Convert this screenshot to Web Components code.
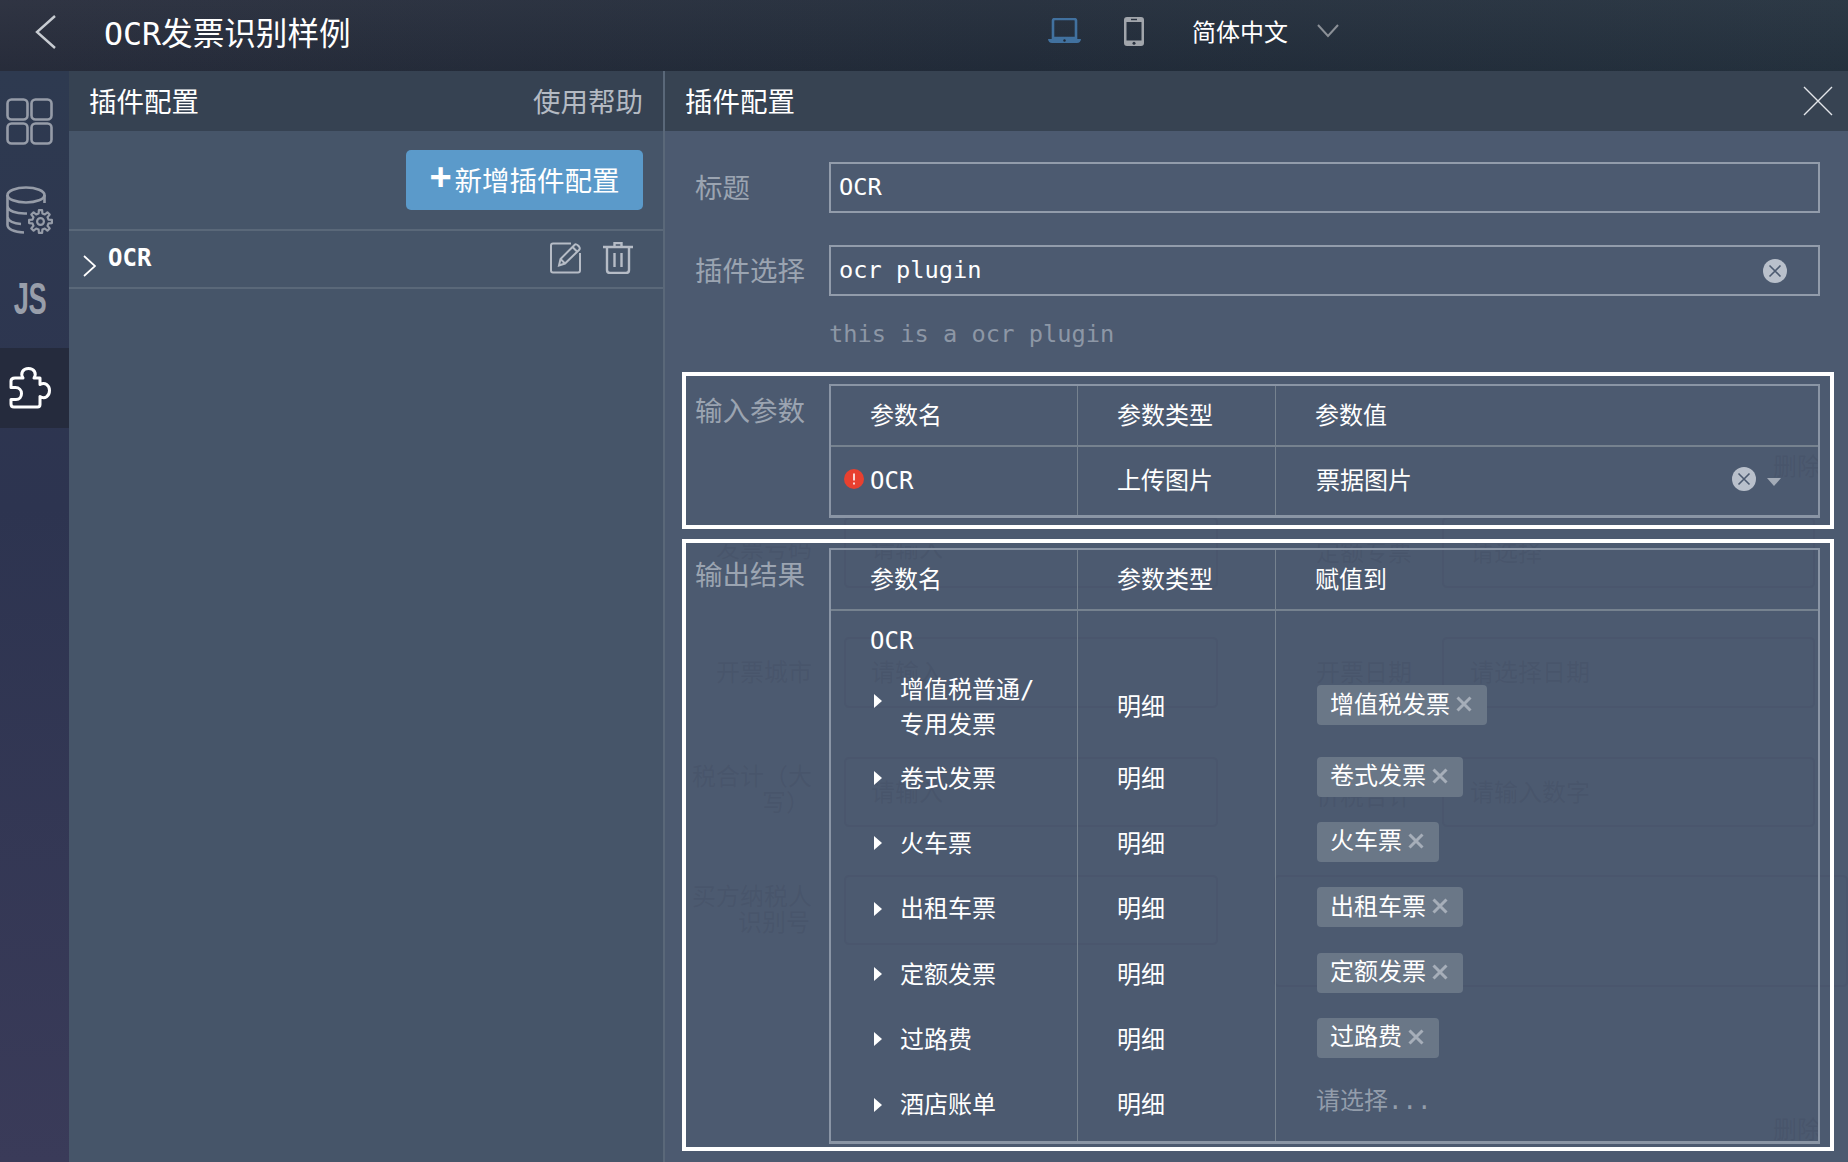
<!DOCTYPE html>
<html lang="zh-CN">
<head>
<meta charset="utf-8">
<title>OCR发票识别样例</title>
<style>
  html, body { margin: 0; height: 100%; background: #465569; overflow: hidden; }
  body { font: 24px "DejaVu Sans Mono", "Noto Sans CJK SC", monospace; color: #fff; }
</style>
</head>
<body>
<app-shell>
  <top-bar slot="top" heading="OCR发票识别样例"></top-bar>
  <side-nav slot="nav"></side-nav>
  <plugin-list slot="list"></plugin-list>
  <config-panel slot="panel">
    <form-row label="标题"><text-field value="OCR"></text-field></form-row>
    <form-row label="插件选择"><text-field value="ocr plugin" clearable></text-field></form-row>
    <plugin-desc>this is a ocr plugin</plugin-desc>

    <param-section label="输入参数" style="margin-top:0">
      <param-table columns="参数名,参数类型,参数值">
        <param-row height="68">
          <span slot="name"><error-dot></error-dot>OCR</span>
          <span slot="type">上传图片</span>
          <select-value slot="value">票据图片</select-value>
        </param-row>
      </param-table>
    </param-section>

    <param-section label="输出结果" style="margin-top:10px">
      <param-table columns="参数名,参数类型,赋值到">
        <param-row height="61.5"><span slot="name">OCR</span></param-row>
        <param-row height="74" pad="4" arrow-up="6" tree>
          <span slot="name">增值税普通/<br>专用发票</span>
          <span slot="type">明细</span>
          <value-tag slot="value">增值税发票</value-tag>
        </param-row>
        <param-row height="65.3" tree><span slot="name">卷式发票</span><span slot="type">明细</span><value-tag slot="value">卷式发票</value-tag></param-row>
        <param-row height="65.3" tree><span slot="name">火车票</span><span slot="type">明细</span><value-tag slot="value">火车票</value-tag></param-row>
        <param-row height="65.3" tree><span slot="name">出租车票</span><span slot="type">明细</span><value-tag slot="value">出租车票</value-tag></param-row>
        <param-row height="65.3" tree><span slot="name">定额发票</span><span slot="type">明细</span><value-tag slot="value">定额发票</value-tag></param-row>
        <param-row height="65.3" tree><span slot="name">过路费</span><span slot="type">明细</span><value-tag slot="value">过路费</value-tag></param-row>
        <param-row height="68" pad="2" tree>
          <span slot="name">酒店账单</span>
          <span slot="type">明细</span>
          <span slot="value" style="color:#939dab;position:relative;top:-4px">请选择...</span>
        </param-row>
      </param-table>
    </param-section>
  </config-panel>
</app-shell>

<script>
const FONT = `"DejaVu Sans Mono", "Noto Sans CJK SC", monospace`;

class AppShell extends HTMLElement {
  constructor() {
    super();
    this.shadowDOM = this.attachShadow({ mode: "open" });
  }

  connectedCallback() {
    this.shadowDOM.innerHTML = `
    <style>
      :host { display: grid; width: 1848px; height: 1162px; grid-template: 71px 1fr / 69px 596px 1fr; overflow: hidden; }
      .top { grid-column: 1 / 4; display: flex; }
      .top ::slotted(*) { flex: 1; }
    </style>
    <div class="top"><slot name="top"></slot></div>
    <slot name="nav"></slot>
    <slot name="list"></slot>
    <slot name="panel"></slot>`;
  }
}

class TopBar extends HTMLElement {
  constructor() {
    super();
    this.shadowDOM = this.attachShadow({ mode: "open" });
  }

  connectedCallback() {
    this.shadowDOM.innerHTML = `
    <style>
      :host { display: flex; align-items: center; height: 71px; color: #fff; font-family: ${FONT};
        background: linear-gradient(180deg, rgba(255,255,255,.035), rgba(0,0,0,.03)), linear-gradient(95deg, #282d3c, #222c3a 55%, #25323f); }
      svg { display: block; flex: none; }
      .back { margin: -8px 0 0 34px; }
      h1 { margin: -10px 0 0 47px; font-size: 31.6px; font-weight: 400; width: 944px; white-space: nowrap; }
      .phone { margin: -9px 0 0 43px; }
      .lang { margin: -11px 0 0 48px; font-size: 24px; width: 125px; white-space: nowrap; }
      .laptop { margin-top: -9px; }
      .down { margin-top: -9px; }
    </style>
    <svg class="back" width="23" height="34" viewBox="0 0 23 34" fill="none" stroke="#c8ccd2" stroke-width="2.4"><path d="M21 1 L3 17 L21 33"/></svg>
    <h1>${this.getAttribute("heading")}</h1>
    <svg class="laptop" width="33" height="26" viewBox="0 0 33 26"><path d="M5 2.5 Q5 1 7 1 H26 Q28 1 28 2.5 V20 H5 Z" fill="none" stroke="#41719f" stroke-width="2.6"/><path d="M0 21 H33 Q32.5 25 29 25 H4 Q.5 25 0 21Z" fill="#41719f"/><circle cx="16.5" cy="22.5" r="1.2" fill="#1f2a38"/></svg>
    <svg class="phone" width="20" height="29" viewBox="0 0 20 29"><path fill="#a1a5ab" fill-rule="evenodd" d="M3 0 H17 Q20 0 20 3 V26 Q20 29 17 29 H3 Q0 29 0 26 V3 Q0 0 3 0Z M2.5 5 V23.5 H17.5 V5Z"/><rect x="7" y="1.8" width="6" height="1.4" fill="#2a3240"/><circle cx="10" cy="26.2" r="1.5" fill="#2a3240"/></svg>
    <span class="lang">简体中文</span>
    <svg class="down" width="22" height="14" viewBox="0 0 22 14" fill="none" stroke="#8b9097" stroke-width="2"><path d="M1 1 L11 12 L21 1"/></svg>`;
  }
}

class SideNav extends HTMLElement {
  constructor() {
    super();
    this.shadowDOM = this.attachShadow({ mode: "open" });
  }

  gearPath(cx, cy) {
    let d = "";
    for (let i = 0; i < 8; i++) {
      const a = (i * Math.PI) / 4;
      [[-0.24, 8.2], [-0.14, 11.5], [0.14, 11.5], [0.24, 8.2]].forEach(([o, r], j) => {
        const x = (cx + r * Math.sin(a + o)).toFixed(1);
        const y = (cy - r * Math.cos(a + o)).toFixed(1);
        d += `${i === 0 && j === 0 ? "M" : "L"}${x} ${y} `;
      });
    }
    return d + "Z";
  }

  connectedCallback() {
    this.shadowDOM.innerHTML = `
    <style>
      :host { display: flex; flex-direction: column; gap: 9px; padding-top: 10px; box-sizing: border-box;
        background: linear-gradient(180deg, #2e3a50, #2d3450 40%, #3a3b59); }
      .item { height: 80px; display: flex; align-items: center; justify-content: center; padding-right: 10px; }
      .item.active { background: #252b3d; }
      .js { color: #989eaa; font: 700 44px "Liberation Sans", sans-serif; transform: scaleX(.62); letter-spacing: -1px; }
    </style>
    <div class="item">
      <svg width="47" height="47" viewBox="0 0 47 47" fill="none" stroke="#969ca8" stroke-width="2.6">
        <rect x="1.5" y="1.5" width="20" height="20" rx="4"/><rect x="25.5" y="1.5" width="20" height="20" rx="4"/>
        <rect x="1.5" y="25.5" width="20" height="20" rx="4"/><rect x="25.5" y="25.5" width="20" height="20" rx="4"/>
      </svg>
    </div>
    <div class="item">
      <svg width="47" height="48" viewBox="0 0 47 48" fill="none" stroke="#969ca8" stroke-width="2.6">
        <ellipse cx="20" cy="9" rx="18.5" ry="7.5"/>
        <path d="M1.5 9 V39 C1.5 43 8 46 18 46.5 M38.5 9 V17 M1.5 20 C2 25 10 28 21 27.5 M1.5 31 C2 35 8 37.5 15 38"/>
        <path d="${this.gearPath(34.5, 35.5)}" stroke-width="2.2" stroke-linejoin="round"/><circle cx="34.5" cy="35.5" r="3.4" stroke-width="2.2"/>
      </svg>
    </div>
    <div class="item"><span class="js">JS</span></div>
    <div class="item active">
      <svg width="42" height="42" viewBox="0 0 42 42" fill="none" stroke="#fff" stroke-width="3" stroke-linejoin="round">
        <path d="M6 11 H14 C11 6 14 1.5 19.500 1.500 C25 1.500 28 6 25 11 H31 V17.500 C36 14.500 40.500 18.500 40.500 23.500 C40.500 29 36 32.500 31 29.500 V37.500 Q31 40 28.500 40 H5 Q2 40 2 37 V32.500 H7 C10.500 32.500 12.500 30 12.500 26.500 C12.500 23 10 20.500 6.500 20.500 H2 V14 Q2 11 6 11Z"/>
      </svg>
    </div>`;
  }
}

class PluginList extends HTMLElement {
  constructor() {
    super();
    this.shadowDOM = this.attachShadow({ mode: "open" });
  }

  connectedCallback() {
    this.shadowDOM.innerHTML = `
    <style>
      :host { display: block; background: #465569; border-right: 2px solid #5a6879; font-family: ${FONT}; }
      header { height: 60px; background: #364252; display: flex; align-items: center; justify-content: space-between; padding: 0 20px 0 20px; font-size: 27.5px; }
      header span { margin-top: -2px; }
      header .help { color: #b4bac3; }
      .actions { padding: 19px 20px 19px 0; display: flex; justify-content: flex-end; }
      button { all: unset; box-sizing: border-box; width: 237px; height: 60px; border-radius: 5px; background: #5b9aca; color: #fff; font: 27.5px ${FONT}; display: flex; align-items: center; justify-content: center; padding: 0 0 2px 0; }
      button b { font: 700 38px "Liberation Sans", sans-serif; margin: -3px 3px 0 0; }
      .row { height: 56px; border-top: 2px solid #5a6879; border-bottom: 2px solid #5a6879; display: flex; align-items: center; padding: 0 30px 0 14px; }
      .row .name { font-weight: 700; margin-left: 12px; flex: 1; margin-top: -3px; }
      .row svg { display: block; }
      .chev { margin-top: 13px; }
      .edit { margin: -3px 21px 0 0; }
      .trash { margin-top: -3px; }
    </style>
    <header><span>插件配置</span><span class="help">使用帮助</span></header>
    <div class="actions"><button><b>+</b>新增插件配置</button></div>
    <div class="row">
      <svg class="chev" width="13" height="22" viewBox="0 0 13 22" fill="none" stroke="#fff" stroke-width="1.7"><path d="M1 1 L12 11 L1 21"/></svg>
      <span class="name">OCR</span>
      <svg class="edit" width="32" height="32" viewBox="0 0 32 32" fill="none" stroke="#b6bcc6" stroke-width="2"><path d="M21 1.500 H3 Q1 1.500 1 3.500 V28.500 Q1 30.500 3 30.500 H28 Q30 30.500 30 28.500 V11"/><path d="M9 23.500 L10.500 17 L24.500 3 Q26 1.500 28 3.500 L29 4.500 Q30.500 6.500 29 8 L15 21.500 Z"/><path d="M10.500 17 L15 21.500 M22.500 5 L27 9.500"/></svg>
      <svg class="trash" width="30" height="32" viewBox="0 0 30 32" fill="none" stroke="#b6bcc6" stroke-width="2.4"><path d="M0 5 H30 M11.500 4 V1 H18.500 V4"/><path d="M4 5 V28 Q4 31 7 31 H23 Q26 31 26 28 V5"/><path d="M11.500 11 V25 M18.500 11 V25"/></svg>
    </div>`;
  }
}

class ConfigPanel extends HTMLElement {
  constructor() {
    super();
    this.shadowDOM = this.attachShadow({ mode: "open" });
  }

  connectedCallback() {
    this.shadowDOM.innerHTML = `
    <style>
      :host { display: flex; flex-direction: column; min-width: 0; background: #4c5a70; font-family: ${FONT}; overflow: hidden; }
      header { flex: none; height: 60px; background: #374352; display: flex; align-items: center; justify-content: space-between; padding: 0 15px 0 20px; font-size: 27.5px; }
      header span { margin-top: -2px; }
      .body { flex: 1; position: relative; padding: 31px 14px 0 17px; }
      .content { position: relative; display: flex; flex-direction: column; }
      ghost-form { position: absolute; inset: 0; }
    </style>
    <header>
      <span>插件配置</span>
      <svg width="30" height="30" viewBox="0 0 30 30" stroke="#e3e6ea" stroke-width="1.4"><path d="M1 1 L29 29 M29 1 L1 29"/></svg>
    </header>
    <div class="body">
      <ghost-form></ghost-form>
      <div class="content"><slot></slot></div>
    </div>`;
  }
}

// faint form left behind the dialog, it shows through the panel
class GhostForm extends HTMLElement {
  constructor() {
    super();
    this.shadowDOM = this.attachShadow({ mode: "open" });
  }

  connectedCallback() {
    const ox = 665, oy = 131;
    const boxes = [
      [844, 517, 374, 71], [1442, 517, 373, 71],
      [844, 637, 374, 71], [1442, 637, 373, 71],
      [844, 757, 374, 70], [1442, 757, 373, 70],
      [844, 875, 374, 70], [1274, 875, 574, 112],
    ];
    // last value: rows of pixels cut off the top, the dialog section hides them
    const texts = [
      ["发票号码", 716, 549, 10], ["请输入", 871, 549, 10], ["定额专票", 1316, 553, 6], ["请选择", 1470, 553, 6],
      ["开票城市", 716, 673], ["请输入", 871, 673], ["开票日期", 1316, 673], ["请选择日期", 1470, 673],
      ["税合计（大", 692, 777], ["写）", 762, 803], ["请输入", 871, 793], ["价税合计", 1316, 797], ["请输入数字", 1470, 793],
      ["买方纳税人", 692, 897], ["识别号", 738, 923], ["删除", 1773, 467], ["删除", 1773, 1130],
    ];
    this.shadowDOM.innerHTML = `
    <style>
      :host { display: block; font-family: ${FONT}; }
      div, span { position: absolute; }
      div { box-sizing: border-box; border: 2px solid rgba(45,55,75,.08); border-radius: 5px; }
      span { color: rgba(45,55,75,.13); font-size: 24px; line-height: 30px; white-space: nowrap; transform: translateY(-15px); }
    </style>
    ${boxes.map(([x, y, w, h]) => `<div style="left:${x - ox}px;top:${y - oy}px;width:${w}px;height:${h}px"></div>`).join("")}
    ${texts.map(([t, x, y, cut]) => `<span style="left:${x - ox}px;top:${y - oy}px;clip-path:inset(${cut || 0}px 0 0 0)">${t}</span>`).join("")}`;
  }
}

class FormRow extends HTMLElement {
  constructor() {
    super();
    this.shadowDOM = this.attachShadow({ mode: "open" });
  }

  connectedCallback() {
    this.shadowDOM.innerHTML = `
    <style>
      :host { display: grid; grid-template-columns: 147px 991px; align-items: center; padding-left: 0; margin-bottom: 32px; }
      label { padding-left: 13px; font-size: 27.5px; color: #9ba4b1; line-height: 51px; position: relative; top: 1px; }
    </style>
    <label>${this.getAttribute("label")}</label>
    <slot></slot>`;
  }
}

class TextField extends HTMLElement {
  constructor() {
    super();
    this.shadowDOM = this.attachShadow({ mode: "open" });
  }

  connectedCallback() {
    const clear = this.hasAttribute("clearable") ? `<clear-icon></clear-icon>` : "";
    this.shadowDOM.innerHTML = `
    <style>
      :host { display: flex; align-items: center; box-sizing: border-box; height: 51px; border: 2px solid #929cab; padding: 0 31px 0 8px; color: #fff; }
      span { flex: 1; font-size: 23.7px; margin-top: -1px; }
    </style>
    <span>${this.getAttribute("value")}</span>${clear}`;
  }
}

class ClearIcon extends HTMLElement {
  constructor() {
    super();
    this.shadowDOM = this.attachShadow({ mode: "open" });
  }

  connectedCallback() {
    this.shadowDOM.innerHTML = `
    <style>:host { display: block; width: 24px; height: 24px; } svg { display: block; }</style>
    <svg width="24" height="24" viewBox="0 0 24 24"><circle cx="12" cy="12" r="12" fill="#b9c0cb"/><path d="M6.500 6.500 L17.500 17.500 M17.500 6.500 L6.500 17.500" stroke="#4c5a70" stroke-width="1.6"/></svg>`;
  }
}

class PluginDesc extends HTMLElement {
  constructor() {
    super();
    this.shadowDOM = this.attachShadow({ mode: "open" });
  }

  connectedCallback() {
    this.shadowDOM.innerHTML = `
    <style>
      :host { display: block; height: 44px; margin-top: -11px; padding: 0 0 0 147px; color: #8d97a6; font-size: 23.700px; line-height: 34px; margin-bottom: 11px; }
    </style>
    <slot></slot>`;
  }
}

class ParamSection extends HTMLElement {
  constructor() {
    super();
    this.shadowDOM = this.attachShadow({ mode: "open" });
  }

  connectedCallback() {
    const inner = this.getAttribute("label") === "输入参数" ? "8px 10px 7px 0" : "5px 10px 3px 0";
    this.shadowDOM.innerHTML = `
    <style>
      :host { display: grid; grid-template-columns: 143px 991px; box-sizing: border-box; width: 1152px; border: 4px solid #fff; padding: ${inner}; }
      label { padding-left: 9px; font-size: 27.5px; color: #9ba4b1; line-height: 54px; }
    </style>
    <label>${this.getAttribute("label")}</label>
    <slot></slot>`;
  }
}

class ParamTable extends HTMLElement {
  constructor() {
    super();
    this.shadowDOM = this.attachShadow({ mode: "open" });
  }

  connectedCallback() {
    const [a, b, c] = this.getAttribute("columns").split(",");
    this.shadowDOM.innerHTML = `
    <style>
      :host { display: block; box-sizing: border-box; border: 2px solid #8a95a5; border-width: 2px 2px 3px 2px; }
      .head { display: grid; grid-template-columns: 247px 198px 1fr; height: 61px; box-sizing: border-box; border-bottom: 2px solid #76828f; align-items: stretch; }
      .head span { display: flex; align-items: center; border-right: 1px solid #76828f; padding-left: 39px; padding-bottom: 4px; }
      .head span:last-child { border-right: 0; }
    </style>
    <div class="head"><span>${a}</span><span>${b}</span><span>${c}</span></div>
    <slot></slot>`;
  }
}

class ParamRow extends HTMLElement {
  constructor() {
    super();
    this.shadowDOM = this.attachShadow({ mode: "open" });
  }

  connectedCallback() {
    const pad = Number(this.getAttribute("pad") || 0);
    const up = Number(this.getAttribute("arrow-up") || 0);
    const tree = this.hasAttribute("tree") ? `<i></i>` : "";
    this.shadowDOM.innerHTML = `
    <style>
      :host { display: grid; grid-template-columns: 247px 198px 1fr; height: ${this.getAttribute("height")}px; }
      .cell { display: flex; align-items: center; box-sizing: border-box; border-right: 1px solid #76828f; padding-bottom: ${pad}px; line-height: 35px; position: relative; }
      .name { padding-left: ${tree ? 69 : 39}px; }
      .type { padding-left: 39px; }
      .value { padding-left: 40px; border-right: 0; }
      i { position: absolute; left: 43px; top: 50%; margin-top: ${-8 - pad / 2 - up}px; width: 0; height: 0; border-left: 8px solid #fff; border-top: 7px solid transparent; border-bottom: 7px solid transparent; }
    </style>
    <div class="cell name">${tree}<slot name="name"></slot></div>
    <div class="cell type"><slot name="type"></slot></div>
    <div class="cell value"><slot name="value"></slot></div>`;
  }
}

class ErrorDot extends HTMLElement {
  constructor() {
    super();
    this.shadowDOM = this.attachShadow({ mode: "open" });
  }

  connectedCallback() {
    this.shadowDOM.innerHTML = `
    <style>
      :host { position: absolute; left: 13px; top: 50%; margin-top: -12px; width: 20px; height: 20px; border-radius: 50%; background: #e8402f; }
      svg { display: block; }
    </style>
    <svg width="20" height="20" viewBox="0 0 20 20"><path d="M10 4.500 V11.500 M10 13.500 V15.500" stroke="#fff" stroke-width="1.600"/></svg>`;
  }
}

class SelectValue extends HTMLElement {
  constructor() {
    super();
    this.shadowDOM = this.attachShadow({ mode: "open" });
  }

  connectedCallback() {
    this.shadowDOM.innerHTML = `
    <style>
      :host { display: flex; align-items: center; width: 465px; }
      span { flex: 1; }
      clear-icon { margin-top: -4px; }
      i { width: 0; height: 0; margin: 2px 0 0 11px; border-top: 8px solid #a3abb7; border-left: 7.500px solid transparent; border-right: 7.500px solid transparent; }
    </style>
    <span><slot></slot></span><clear-icon></clear-icon><i></i>`;
  }
}

class ValueTag extends HTMLElement {
  constructor() {
    super();
    this.shadowDOM = this.attachShadow({ mode: "open" });
  }

  connectedCallback() {
    this.shadowDOM.innerHTML = `
    <style>
      :host { display: inline-flex; align-items: center; height: 40px; box-sizing: border-box; padding: 0 14px 0 13px; margin: -5px 0 0 1px; border-radius: 4px; background: #6a7787; color: #fff; }
      svg { display: block; margin: -2px 0 0 5px; }
    </style>
    <slot></slot>
    <svg width="18" height="18" viewBox="0 0 18 18"><path d="M2.500 2.500 L15.500 15.500 M15.500 2.500 L2.500 15.500" stroke="#a6aeb9" stroke-width="3"/></svg>`;
  }
}

customElements.define("app-shell", AppShell);
customElements.define("top-bar", TopBar);
customElements.define("side-nav", SideNav);
customElements.define("plugin-list", PluginList);
customElements.define("config-panel", ConfigPanel);
customElements.define("ghost-form", GhostForm);
customElements.define("form-row", FormRow);
customElements.define("text-field", TextField);
customElements.define("clear-icon", ClearIcon);
customElements.define("plugin-desc", PluginDesc);
customElements.define("param-section", ParamSection);
customElements.define("param-table", ParamTable);
customElements.define("param-row", ParamRow);
customElements.define("error-dot", ErrorDot);
customElements.define("select-value", SelectValue);
customElements.define("value-tag", ValueTag);
</script>
</body>
</html>
